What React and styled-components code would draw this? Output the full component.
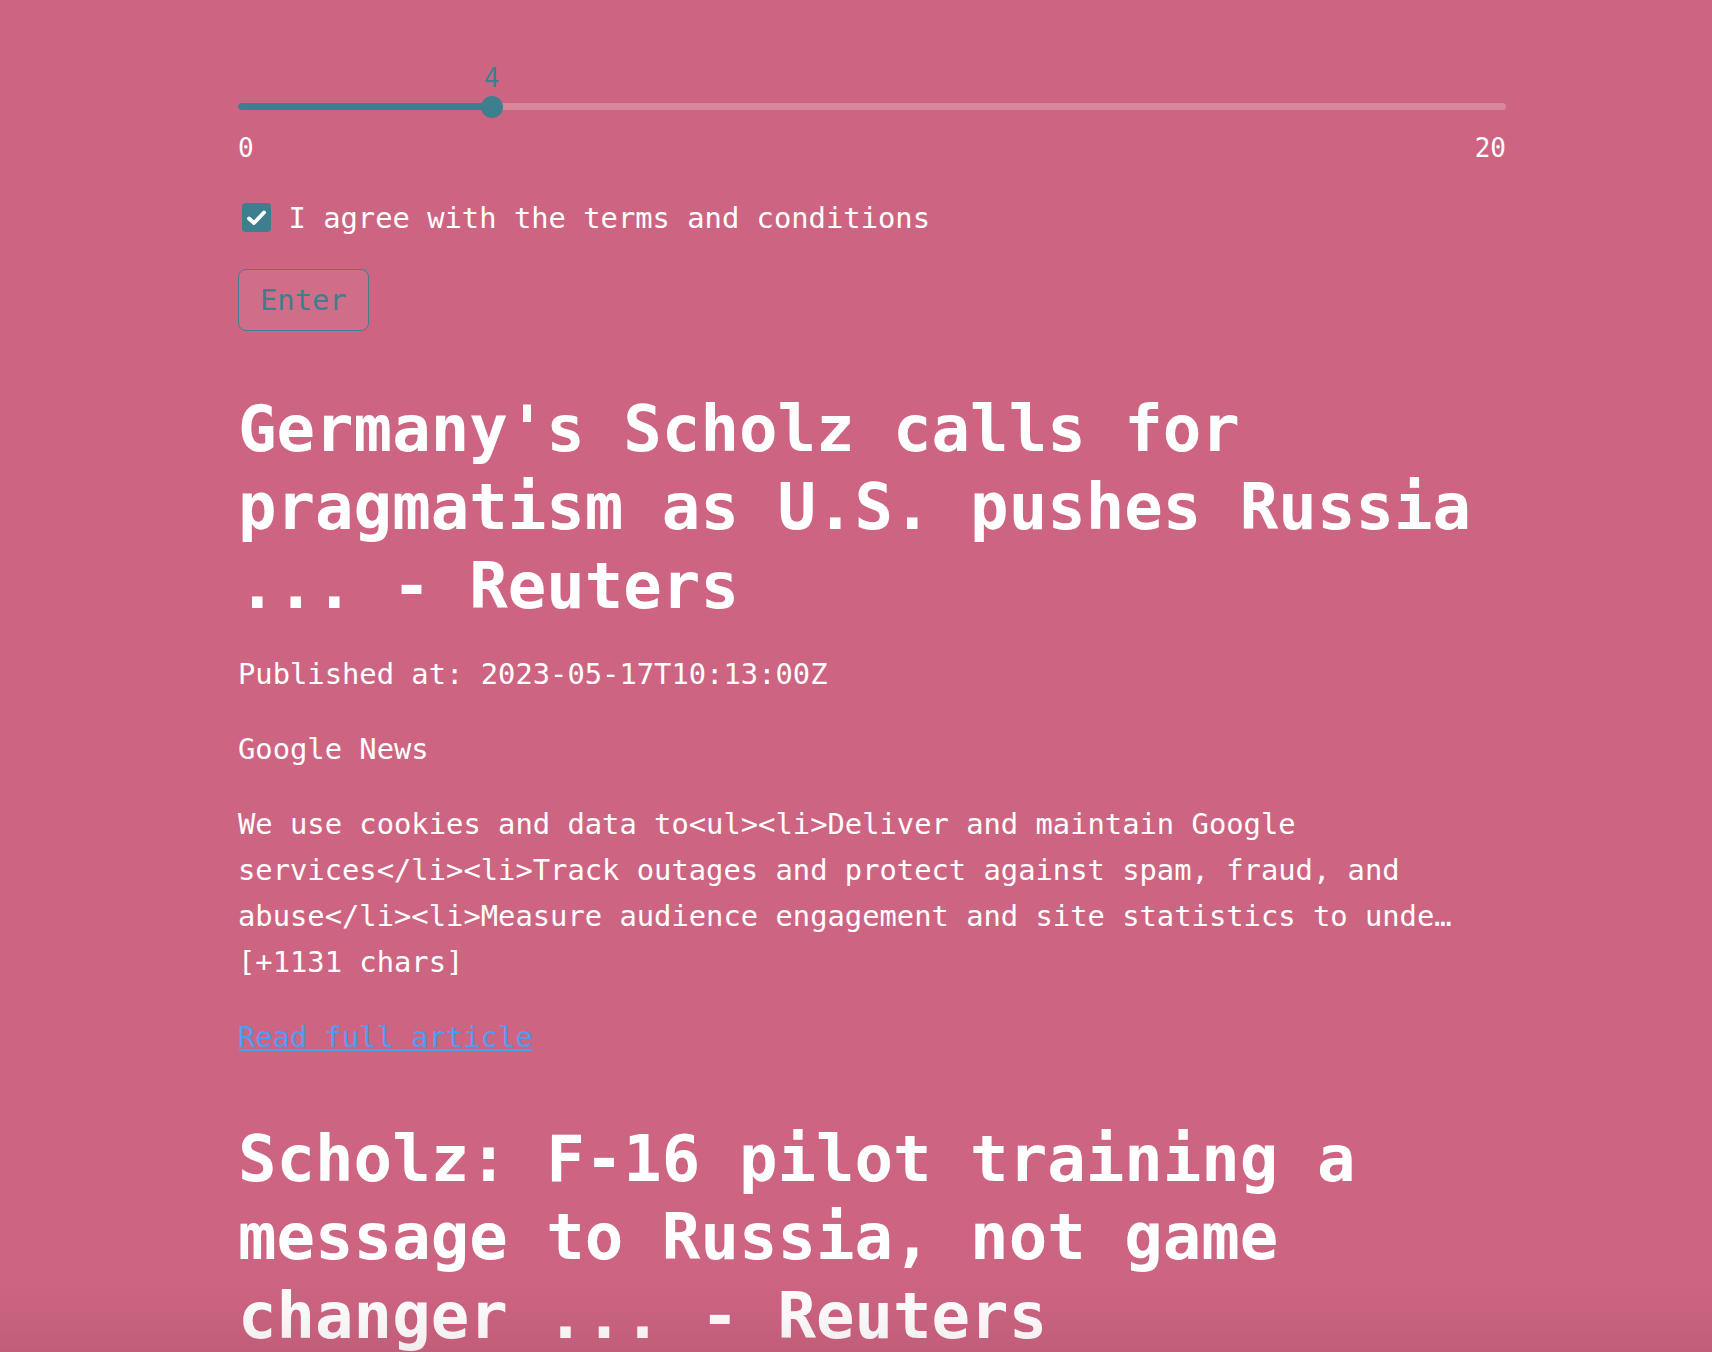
import React from "react";
import styled, { createGlobalStyle } from "styled-components";

const teal = "#3e7f8f";
const pink = "#cd6582";

const GlobalStyle = createGlobalStyle`
  html, body {
    margin: 0;
    padding: 0;
    background: ${pink};
  }
  body {
    font-family: "DejaVu Sans Mono", "Liberation Mono", monospace;
    color: #ffffff;
    min-height: 100vh;
  }
`;

const Main = styled.main`
  width: 1268px;
  margin-left: 238px;
  padding-top: 65px;
`;

const SliderBlock = styled.div`
  display: flex;
  flex-direction: column;
`;

const ValueRow = styled.div`
  position: relative;
  height: 26px;
  margin-bottom: 4.5px;
`;

const ValueLabel = styled.span`
  position: absolute;
  top: 0;
  transform: translateX(-50%);
  font-size: 26px;
  line-height: 26px;
  color: ${teal};
`;

const Rail = styled.div`
  position: relative;
  height: 22px;
  display: flex;
  align-items: center;
`;

const Track = styled.div`
  width: 100%;
  height: 7px;
  border-radius: 4px;
  background: #d9879b;
  overflow: hidden;
`;

const Fill = styled.div`
  height: 100%;
  background: ${teal};
`;

const Thumb = styled.div`
  position: absolute;
  top: 0;
  width: 22px;
  height: 22px;
  border-radius: 50%;
  background: ${teal};
  transform: translateX(-50%);
`;

const Ticks = styled.div`
  display: flex;
  justify-content: space-between;
  margin-top: 15px;
  font-size: 26px;
  line-height: 30px;
`;

const CheckRow = styled.label`
  display: flex;
  align-items: center;
  gap: 18px;
  margin-top: 40px;
  padding-left: 3.5px;
  font-size: 28.8px;
  line-height: 30px;
`;

const Box = styled.span`
  width: 29px;
  height: 29px;
  border-radius: 4px;
  background: ${teal};
  display: flex;
  align-items: center;
  justify-content: center;
`;

const ButtonWrap = styled.div`
  margin-top: 36px;
  margin-bottom: 28px;
`;

const Button = styled.button`
  font-family: inherit;
  font-size: 28.8px;
  line-height: 46px;
  padding: 7px 21px;
  border: 1px solid ${teal};
  border-radius: 8px;
  background: #d06d88;
  color: ${teal};
`;

const Article = styled.article`
  display: flex;
  flex-direction: column;
`;

const Title = styled.h1`
  margin: 0;
  padding: 31px 0 25.5px;
  font-size: 64px;
  line-height: 78.5px;
  font-weight: 700;
`;

const Para = styled.p`
  margin: 0 0 29px;
  font-size: 28.8px;
  line-height: 46px;
`;

const Link = styled.a`
  color: #4d9cf2;
  text-decoration: underline;
`;

const BottomFade = styled.div`
  position: fixed;
  left: 0;
  right: 0;
  bottom: 0;
  height: 70px;
  pointer-events: none;
  background: linear-gradient(to bottom, rgba(60, 0, 20, 0), rgba(60, 0, 20, 0.07));
`;

const articles = [
  {
    title: "Germany's Scholz calls for pragmatism as U.S. pushes Russia ... - Reuters",
    published: "2023-05-17T10:13:00Z",
    source: "Google News",
    body:
      "We use cookies and data to<ul><li>Deliver and maintain Google services</li><li>Track outages and protect against spam, fraud, and abuse</li><li>Measure audience engagement and site statistics to unde… [+1131 chars]",
  },
  {
    title: "Scholz: F-16 pilot training a message to Russia, not game changer ... - Reuters",
    published: "2023-05-17T08:42:00Z",
    source: "Google News",
    body: "",
  },
];

function Slider({ value, min, max }) {
  const pct = ((value - min) / (max - min)) * 100;
  return (
    <SliderBlock>
      <ValueRow>
        <ValueLabel style={{ left: `${pct}%` }}>{value}</ValueLabel>
      </ValueRow>
      <Rail>
        <Track>
          <Fill style={{ width: `${pct}%` }} />
        </Track>
        <Thumb style={{ left: `${pct}%` }} />
      </Rail>
      <Ticks>
        <span>{min}</span>
        <span>{max}</span>
      </Ticks>
    </SliderBlock>
  );
}

export default function App() {
  return (
    <>
      <GlobalStyle />
      <Main>
        <Slider value={4} min={0} max={20} />
        <CheckRow>
          <Box>
            <svg width="23" height="23" viewBox="0 0 23 23">
              <polyline
                points="4,12.5 9,17 19,6.5"
                fill="none"
                stroke="#ffffff"
                strokeWidth="3.8"
                strokeLinecap="round"
                strokeLinejoin="round"
              />
            </svg>
          </Box>
          I agree with the terms and conditions
        </CheckRow>
        <ButtonWrap>
          <Button>Enter</Button>
        </ButtonWrap>
        {articles.map((a) => (
          <Article key={a.title}>
            <Title>{a.title}</Title>
            <Para>Published at: {a.published}</Para>
            <Para>{a.source}</Para>
            {a.body && <Para>{a.body}</Para>}
            <Para>
              <Link href="#">Read full article</Link>
            </Para>
          </Article>
        ))}
      </Main>
      <BottomFade />
    </>
  );
}
